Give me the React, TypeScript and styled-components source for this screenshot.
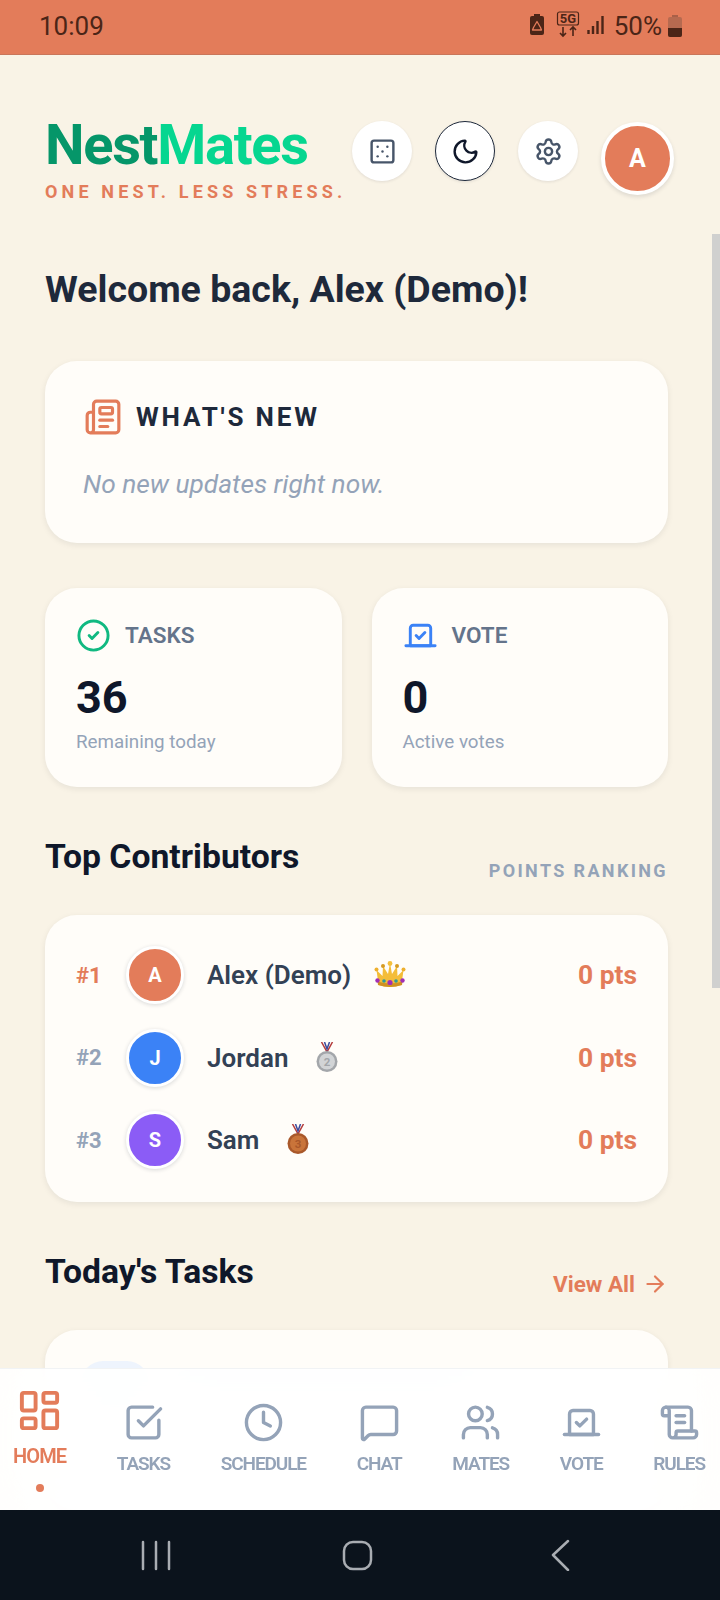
import { createGlobalStyle, styled } from 'styled-components';
import {
  ArrowRight,
  CircleCheck,
  Clock,
  Dice5,
  LayoutDashboard,
  MessageSquare,
  Moon,
  Newspaper,
  ScrollText,
  Settings,
  SquareCheckBig,
  Users,
  Vote,
} from 'lucide-react';

const color = {
  coral: '#e37c5a',
  cream: '#f9f3e6',
  card: '#fffdf9',
  ink: '#0f172a',
  slate800: '#1e293b',
  slate700: '#334155',
  slate600: '#475569',
  slate500: '#64748b',
  slate400: '#94a3b8',
};

const GlobalStyle = createGlobalStyle`
  html, body {
    margin: 0;
    padding: 0;
    overflow: hidden;
  }
  * {
    box-sizing: border-box;
  }
  body {
    font-family: Roboto, "Liberation Sans", sans-serif;
  }
`;

const Screen = styled.div`
  position: relative;
  display: flex;
  flex-direction: column;
  width: 720px;
  height: 1600px;
  overflow: hidden;
  background: ${color.cream};
`;

const StatusBar = styled.div`
  display: flex;
  flex-shrink: 0;
  justify-content: space-between;
  align-items: center;
  height: 55px;
  padding: 0 37px 2px 39px;
  background: ${color.coral};
  border-bottom: 1px solid #c9765a;
  color: #4b2517;
  font-size: 26px;
`;

const StatusRight = styled.div`
  display: flex;
  align-items: center;
  gap: 5px;
`;

const Main = styled.main`
  flex: 1;
  min-height: 0;
  overflow: hidden;
  padding: 66px 52px 0 45px;
`;

const Header = styled.header`
  display: flex;
  justify-content: space-between;
  align-items: flex-start;
`;

const Brand = styled.div`
  display: flex;
  flex-direction: column;
  margin-top: -6px;
`;

const Logo = styled.div`
  color: #059669;
  font-size: 56px;
  font-weight: 700;
  line-height: 60px;
  letter-spacing: -1.3px;
  > span {
    color: #06d690;
  }
`;

const Tagline = styled.div`
  margin-top: 6px;
  color: ${color.coral};
  font-size: 18px;
  font-weight: 700;
  line-height: 22px;
  letter-spacing: 4.15px;
  white-space: nowrap;
`;

const HeaderActions = styled.div`
  display: flex;
  align-items: flex-start;
  gap: 23px;
  margin-right: -6px;
`;

const IconButton = styled.button<{ $outlined?: boolean }>`
  display: flex;
  justify-content: center;
  align-items: center;
  width: 60px;
  height: 60px;
  padding: 0;
  border: ${({ $outlined }) => ($outlined ? `1.5px solid ${color.slate800}` : 'none')};
  border-radius: 50%;
  background: #fff;
  box-shadow: 0 1px 3px rgba(15, 23, 42, 0.1);
  color: ${({ $outlined }) => ($outlined ? color.ink : color.slate600)};
`;

const UserAvatar = styled.div`
  display: flex;
  justify-content: center;
  align-items: center;
  width: 73px;
  height: 73px;
  margin-top: 1px;
  border: 4px solid #fff;
  border-radius: 50%;
  background: ${color.coral};
  box-shadow: 0 2px 4px rgba(15, 23, 42, 0.12);
  color: #fff;
  font-size: 25px;
  font-weight: 700;
`;

const Welcome = styled.h1`
  margin: 64px 0 0;
  color: ${color.slate800};
  font-size: 37.5px;
  font-weight: 700;
  line-height: 44px;
`;

const Card = styled.section`
  border-radius: 32px;
  background: ${color.card};
  box-shadow: 0 2px 6px rgba(15, 23, 42, 0.08);
`;

const NewsCard = styled(Card)`
  height: 182px;
  margin-top: 50px;
  padding: 37px 38px;
`;

const NewsHeading = styled.div`
  display: flex;
  align-items: center;
  gap: 14px;
  padding-left: 1px;
  color: ${color.coral};
`;

const NewsTitle = styled.h2`
  margin: 0;
  color: ${color.slate800};
  font-size: 26px;
  font-weight: 700;
  line-height: 36px;
  letter-spacing: 2.8px;
`;

const NewsEmpty = styled.p`
  margin: 32px 0 0;
  color: ${color.slate400};
  font-size: 26.3px;
  font-style: italic;
  line-height: 32px;
`;

const StatGrid = styled.div`
  display: grid;
  grid-template-columns: 1fr 1fr;
  gap: 30px;
  margin-top: 45px;
`;

const StatCard = styled(Card)`
  height: 199px;
  padding: 29px 31px;
`;

const StatHeading = styled.div<{ $accent: string }>`
  display: flex;
  align-items: center;
  gap: 14px;
  height: 36px;
  color: ${({ $accent }) => $accent};
`;

const StatLabel = styled.span`
  color: ${color.slate500};
  font-size: 22.5px;
  font-weight: 600;
`;

const StatValue = styled.div`
  margin-top: 18px;
  color: ${color.ink};
  font-size: 45px;
  font-weight: 700;
  line-height: 54px;
`;

const StatCaption = styled.div`
  margin-top: 5px;
  color: ${color.slate400};
  font-size: 18.8px;
  line-height: 24px;
`;

const SectionHead = styled.div<{ $top: number }>`
  display: flex;
  justify-content: space-between;
  align-items: flex-end;
  margin-top: ${({ $top }) => $top}px;
`;

const SectionTitle = styled.h2`
  margin: 0;
  color: ${color.ink};
  font-size: 33.7px;
  font-weight: 700;
  line-height: 40px;
`;

const SectionNote = styled.span`
  margin-bottom: -6px;
  color: ${color.slate400};
  font-size: 18px;
  font-weight: 700;
  line-height: 24px;
  letter-spacing: 2.35px;
`;

const ViewAll = styled.a`
  display: flex;
  align-items: center;
  gap: 7px;
  margin-bottom: -5px;
  color: ${color.coral};
  font-size: 22.5px;
  font-weight: 700;
  line-height: 26px;
`;

const RankCard = styled(Card)`
  display: flex;
  flex-direction: column;
  gap: 24.5px;
  margin-top: 38px;
  padding: 31px 31px 33px;
`;

const RankRow = styled.div`
  display: flex;
  align-items: center;
  height: 58px;
`;

const RankNumber = styled.span<{ $first?: boolean }>`
  width: 50px;
  color: ${({ $first }) => ($first ? color.coral : color.slate400)};
  font-size: 22px;
  font-weight: 700;
`;

const RankAvatar = styled.div<{ $bg: string }>`
  display: flex;
  flex-shrink: 0;
  justify-content: center;
  align-items: center;
  width: 58px;
  height: 58px;
  border: 3px solid #fff;
  border-radius: 50%;
  background: ${({ $bg }) => $bg};
  box-shadow: 0 1px 4px rgba(15, 23, 42, 0.16);
  color: #fff;
  font-size: 20px;
  font-weight: 700;
`;

const RankName = styled.span`
  margin-left: 23px;
  color: ${color.slate700};
  font-size: 26px;
  font-weight: 600;
`;

const RankEmoji = styled.svg`
  flex-shrink: 0;
  margin-top: -2px;
  margin-left: 23px;
`;

const RankPoints = styled.span`
  margin-left: auto;
  color: ${color.coral};
  font-size: 26.4px;
  font-weight: 700;
`;

const TaskCard = styled(Card)`
  height: 180px;
  margin-top: 38px;
  padding: 31px 36px;
`;

const TaskRow = styled.div`
  display: flex;
  gap: 28px;
`;

const TaskIcon = styled.div`
  flex-shrink: 0;
  width: 68px;
  height: 68px;
  border-radius: 22px;
  background: #eef4fd;
`;

const TaskLine = styled.div`
  width: 300px;
  height: 30px;
  margin-top: 9px;
  border-radius: 8px;
  background: #edf0f5;
`;

const BottomNav = styled.nav`
  position: absolute;
  right: 0;
  bottom: 90px;
  left: 0;
  display: flex;
  justify-content: space-between;
  align-items: flex-start;
  height: 142px;
  padding: 0 15px 0 13px;
  border-top: 1px solid #f1f3f5;
  background: rgba(255, 255, 255, 0.92);
  backdrop-filter: blur(24px);
`;

const NavItem = styled.a<{ $active?: boolean }>`
  position: relative;
  display: flex;
  flex-direction: column;
  align-items: center;
  gap: ${({ $active }) => ($active ? '10px' : '9px')};
  padding-top: ${({ $active }) => ($active ? '18px' : '33px')};
  color: ${({ $active }) => ($active ? color.coral : color.slate400)};
  font-size: ${({ $active }) => ($active ? '20px' : '19px')};
  font-weight: 600;
  line-height: 24px;
  letter-spacing: ${({ $active }) => ($active ? '-0.9px' : '-1.1px')};
`;

const NavDot = styled.span`
  position: absolute;
  bottom: -24px;
  width: 8px;
  height: 8px;
  border-radius: 50%;
  background: ${color.coral};
`;

const SystemNav = styled.div`
  position: absolute;
  right: 0;
  bottom: 0;
  left: 0;
  display: flex;
  justify-content: center;
  align-items: center;
  height: 90px;
  padding-bottom: 1px;
  background: #0b131c;
`;

const ScrollThumb = styled.div`
  position: absolute;
  top: 234px;
  right: 0;
  width: 8px;
  height: 754px;
  background: #d0d0cf;
`;

const StatusIcons = () => (
  <svg width="79" height="30" viewBox="0 0 79 30" fill="none" aria-hidden="true">
    <rect x="0" y="5" width="14" height="19" rx="2" fill="#4b2517" />
    <rect x="4" y="3" width="6" height="3" fill="#4b2517" />
    <path d="M7 10.500l3.500 6 1 2.500h-9l1-2.500z" stroke="#e37c5a" strokeWidth="1.300" strokeLinejoin="round" />
    <rect x="27.500" y="1" width="21" height="13" rx="2" stroke="#4b2517" strokeWidth="1.200" />
    <text x="38" y="12" textAnchor="middle" fontFamily="Roboto" fontSize="13" fontWeight="700" fill="#4b2517">5G</text>
    <path d="M33 16v9M30 22l3 3 3-3M43 25v-9M40 19l3-3 3 3" stroke="#4b2517" strokeWidth="1.600" />
    <path d="M58.500 19v4M63 15v8M67.500 10v13M72.500 5v18" stroke="#4b2517" strokeWidth="2.400" />
  </svg>
);

const Battery = () => (
  <svg width="16" height="22" viewBox="0 0 16 22" aria-hidden="true">
    <rect x="5" y="0" width="6" height="3" fill="#a96048" />
    <rect x="1" y="2" width="14" height="20" rx="2" fill="#b66a50" />
    <path d="M1 13h14v7a2 2 0 0 1-2 2H3a2 2 0 0 1-2-2z" fill="#4b2517" />
  </svg>
);

const Crown = () => (
  <RankEmoji width="32" height="27" viewBox="0 0 32 27" aria-hidden="true">
    <path d="M6 18q10-7 20 0v4H6z" fill="#a8701a" />
    <path d="M2.500 9l6 6 .5-10 5 8 2-11 2 11 5-8 .5 10 6-6-2 15q-11.500 4-23 0z" fill="#f4bd38" />
    <path d="M4 24q12 4 24 0l.5-3.500q-12.500 4-25 0z" fill="#cf9122" />
    <circle cx="2.500" cy="8.500" r="2" fill="#eeb02e" />
    <circle cx="9" cy="5" r="2" fill="#d69b22" />
    <circle cx="16" cy="2.500" r="2.400" fill="#f4c03d" />
    <circle cx="23" cy="5" r="2" fill="#d69b22" />
    <circle cx="29.500" cy="8.500" r="2" fill="#eeb02e" />
    <circle cx="3.500" cy="19.500" r="2.200" fill="#a12fb5" />
    <circle cx="10" cy="20" r="1.800" fill="#2d9a9a" />
    <circle cx="16" cy="21.500" r="2.600" fill="#a12fb5" />
    <circle cx="22" cy="20" r="1.800" fill="#2d9a9a" />
    <circle cx="28.500" cy="19.500" r="2.200" fill="#a12fb5" />
  </RankEmoji>
);

const Medal = ({ face, rim, place }: { face: string; rim: string; place: string }) => (
  <RankEmoji width="32" height="30" viewBox="0 0 32 30" aria-hidden="true">
    <path d="M10.500 0l5.500 10 5.500-10" fill="none" stroke="#b33a3a" strokeWidth="1.500" />
    <path d="M13.500 0l2.500 7 2.500-7" fill="none" stroke="#3b4a9c" strokeWidth="1.500" />
    <circle cx="16" cy="19.500" r="10.500" fill={rim} />
    <circle cx="16" cy="19.500" r="8" fill={face} />
    <text x="16" y="23.500" textAnchor="middle" fontFamily="Roboto" fontSize="11.500" fontWeight="700" fill={rim}>
      {place}
    </text>
  </RankEmoji>
);

const navItems = [
  { label: 'TASKS', Icon: SquareCheckBig },
  { label: 'SCHEDULE', Icon: Clock },
  { label: 'CHAT', Icon: MessageSquare },
  { label: 'MATES', Icon: Users },
  { label: 'VOTE', Icon: Vote },
  { label: 'RULES', Icon: ScrollText },
];

const App = () => {
  return (
    <Screen>
      <GlobalStyle />
      <StatusBar>
        <span>10:09</span>
        <StatusRight>
          <StatusIcons />
          <span>50%</span>
          <Battery />
        </StatusRight>
      </StatusBar>

      <Main>
        <Header>
          <Brand>
            <Logo>
              Nest<span>Mates</span>
            </Logo>
            <Tagline>ONE NEST. LESS STRESS.</Tagline>
          </Brand>
          <HeaderActions>
            <IconButton>
              <Dice5 size={29} />
            </IconButton>
            <IconButton $outlined>
              <Moon size={29} />
            </IconButton>
            <IconButton>
              <Settings size={29} />
            </IconButton>
            <UserAvatar>A</UserAvatar>
          </HeaderActions>
        </Header>

        <Welcome>Welcome back, Alex (Demo)!</Welcome>

        <NewsCard>
          <NewsHeading>
            <Newspaper size={38} />
            <NewsTitle>WHAT'S NEW</NewsTitle>
          </NewsHeading>
          <NewsEmpty>No new updates right now.</NewsEmpty>
        </NewsCard>

        <StatGrid>
          <StatCard>
            <StatHeading $accent="#10b981">
              <CircleCheck size={35} />
              <StatLabel>TASKS</StatLabel>
            </StatHeading>
            <StatValue>36</StatValue>
            <StatCaption>Remaining today</StatCaption>
          </StatCard>
          <StatCard>
            <StatHeading $accent="#3b82f6">
              <Vote size={35} />
              <StatLabel>VOTE</StatLabel>
            </StatHeading>
            <StatValue>0</StatValue>
            <StatCaption>Active votes</StatCaption>
          </StatCard>
        </StatGrid>

        <SectionHead $top={50}>
          <SectionTitle>Top Contributors</SectionTitle>
          <SectionNote>POINTS RANKING</SectionNote>
        </SectionHead>

        <RankCard>
          <RankRow>
            <RankNumber $first>#1</RankNumber>
            <RankAvatar $bg={color.coral}>A</RankAvatar>
            <RankName>Alex (Demo)</RankName>
            <Crown />
            <RankPoints>0 pts</RankPoints>
          </RankRow>
          <RankRow>
            <RankNumber>#2</RankNumber>
            <RankAvatar $bg="#3b82f6">J</RankAvatar>
            <RankName>Jordan</RankName>
            <Medal face="#d2d4d6" rim="#a3a6aa" place="2" />
            <RankPoints>0 pts</RankPoints>
          </RankRow>
          <RankRow>
            <RankNumber>#3</RankNumber>
            <RankAvatar $bg="#8b5cf6">S</RankAvatar>
            <RankName>Sam</RankName>
            <Medal face="#c9743a" rim="#a9582a" place="3" />
            <RankPoints>0 pts</RankPoints>
          </RankRow>
        </RankCard>

        <SectionHead $top={50}>
          <SectionTitle>Today's Tasks</SectionTitle>
          <ViewAll>
            View All
            <ArrowRight size={26} />
          </ViewAll>
        </SectionHead>

        <TaskCard>
          <TaskRow>
            <TaskIcon />
            <TaskLine />
          </TaskRow>
        </TaskCard>
      </Main>

      <ScrollThumb />

      <BottomNav>
        <NavItem $active>
          <LayoutDashboard size={47} />
          HOME
          <NavDot />
        </NavItem>
        {navItems.map(({ label, Icon }) => (
          <NavItem key={label}>
            <Icon size={41} />
            {label}
          </NavItem>
        ))}
      </BottomNav>

      <SystemNav>
        <svg width="440" height="32" viewBox="0 0 440 32" fill="none" stroke="#a9adb2" strokeWidth="2.500" strokeLinecap="round" strokeLinejoin="round" aria-hidden="true">
          <path d="M3 3v27M16 3v27M29 3v27" />
          <rect x="204" y="3" width="27" height="27" rx="9" />
          <path d="M428 2l-15 14 15 15" />
        </svg>
      </SystemNav>
    </Screen>
  );
};

export default App;
